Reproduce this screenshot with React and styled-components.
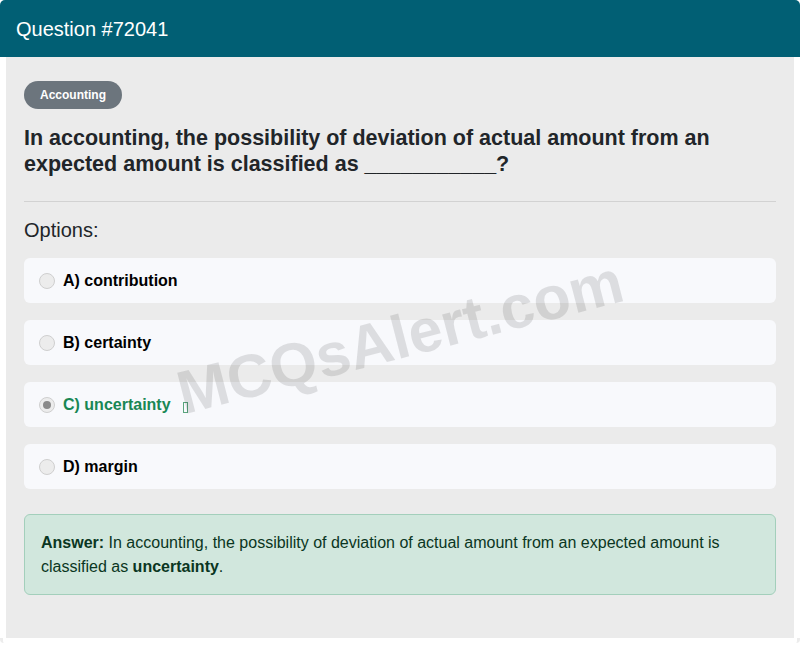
import React from "react";
import styled, { createGlobalStyle } from "styled-components";

const Global = createGlobalStyle`
  html, body { margin: 0; padding: 0; background: #ffffff; }
  body { font-family: "Liberation Sans", Arial, sans-serif; }
  * { box-sizing: border-box; }
`;

const Card = styled.div`
  position: relative;
  width: 800px;
  overflow: hidden;
`;

const Header = styled.div`
  height: 57px;
  display: flex;
  align-items: center;
  padding: 2px 16px 0;
  background: #015f74;
  color: #ffffff;
  font-size: 20px;
  border-radius: 5px 5px 0 0;
`;

const Body = styled.div`
  margin: 0 6px;
  background: #ebebeb;
  padding: 24px 18px 43px;
  display: flex;
  flex-direction: column;
`;

const Badge = styled.span`
  align-self: flex-start;
  height: 28px;
  padding: 0 16px;
  display: inline-flex;
  align-items: center;
  background: #6c757d;
  color: #ffffff;
  font-size: 12px;
  font-weight: 700;
  border-radius: 14px;
`;

const Question = styled.h2`
  margin: 16px 0 0;
  font-size: 21.5px;
  line-height: 26px;
  font-weight: 700;
  color: #212529;
`;

const Divider = styled.hr`
  margin: 24px 0 0;
  border: 0;
  border-top: 1px solid #d2d2d2;
  height: 0;
`;

const OptionsTitle = styled.div`
  margin-top: 16px;
  font-size: 20px;
  line-height: 24px;
  color: #212529;
`;

const OptionList = styled.div`
  margin-top: 16px;
  display: flex;
  flex-direction: column;
  gap: 17px;
`;

const OptionRow = styled.div`
  height: 45px;
  display: flex;
  align-items: center;
  gap: 8px;
  padding: 0 15px;
  background: #f8f9fc;
  border-radius: 6px;
  font-size: 16px;
  font-weight: 700;
  color: ${(p) => (p.$correct ? "#198754" : "#000000")};
`;

const Radio = styled.span`
  width: 16px;
  height: 16px;
  border-radius: 50%;
  border: 1px solid #cfcfcf;
  background: #ececec;
  display: inline-flex;
  align-items: center;
  justify-content: center;
  flex: none;
  &::after {
    content: "";
    width: 8px;
    height: 8px;
    border-radius: 50%;
    background: #8a8a8a;
    display: ${(p) => (p.$checked ? "block" : "none")};
  }
`;

const Tofu = styled.span`
  display: inline-block;
  width: 5px;
  height: 11px;
  border: 1px solid #5aa57e;
  margin-left: 4px;
  margin-top: 5px;
`;

const Answer = styled.div`
  margin-top: 25px;
  background: #d1e7dd;
  border: 1px solid #a3cfbb;
  border-radius: 6px;
  padding: 16px 16px 15px;
  font-size: 16px;
  line-height: 24px;
  color: #0a3622;
`;

const Watermark = styled.div`
  position: absolute;
  left: 400px;
  top: 337px;
  transform: translate(-50%, -50%) rotate(-14.5deg);
  font-size: 61px;
  font-weight: 700;
  color: rgba(0, 0, 0, 0.11);
  white-space: nowrap;
  pointer-events: none;
`;

const Footer = styled.div`
  height: 5px;
  border-left: 3px solid #ececec;
  border-right: 3px solid #ececec;
  border-radius: 0 0 4px 4px;
`;

const options = [
  { label: "A) contribution" },
  { label: "B) certainty" },
  { label: "C) uncertainty", correct: true },
  { label: "D) margin" },
];

export default function App() {
  return (
    <>
      <Global />
      <Card>
        <Header>Question #72041</Header>
        <Body>
          <Badge>Accounting</Badge>
          <Question>
            In accounting, the possibility of deviation of actual amount from an
            expected amount is classified as ___________?
          </Question>
          <Divider />
          <OptionsTitle>Options:</OptionsTitle>
          <OptionList>
            {options.map((o) => (
              <OptionRow key={o.label} $correct={o.correct}>
                <Radio $checked={o.correct} />
                <span>{o.label}</span>
                {o.correct && <Tofu />}
              </OptionRow>
            ))}
          </OptionList>
          <Answer>
            <strong>Answer:</strong> In accounting, the possibility of deviation of
            actual amount from an expected amount is classified as{" "}
            <strong>uncertainty</strong>.
          </Answer>
        </Body>
        <Footer />
        <Watermark>MCQsAlert.com</Watermark>
      </Card>
    </>
  );
}
